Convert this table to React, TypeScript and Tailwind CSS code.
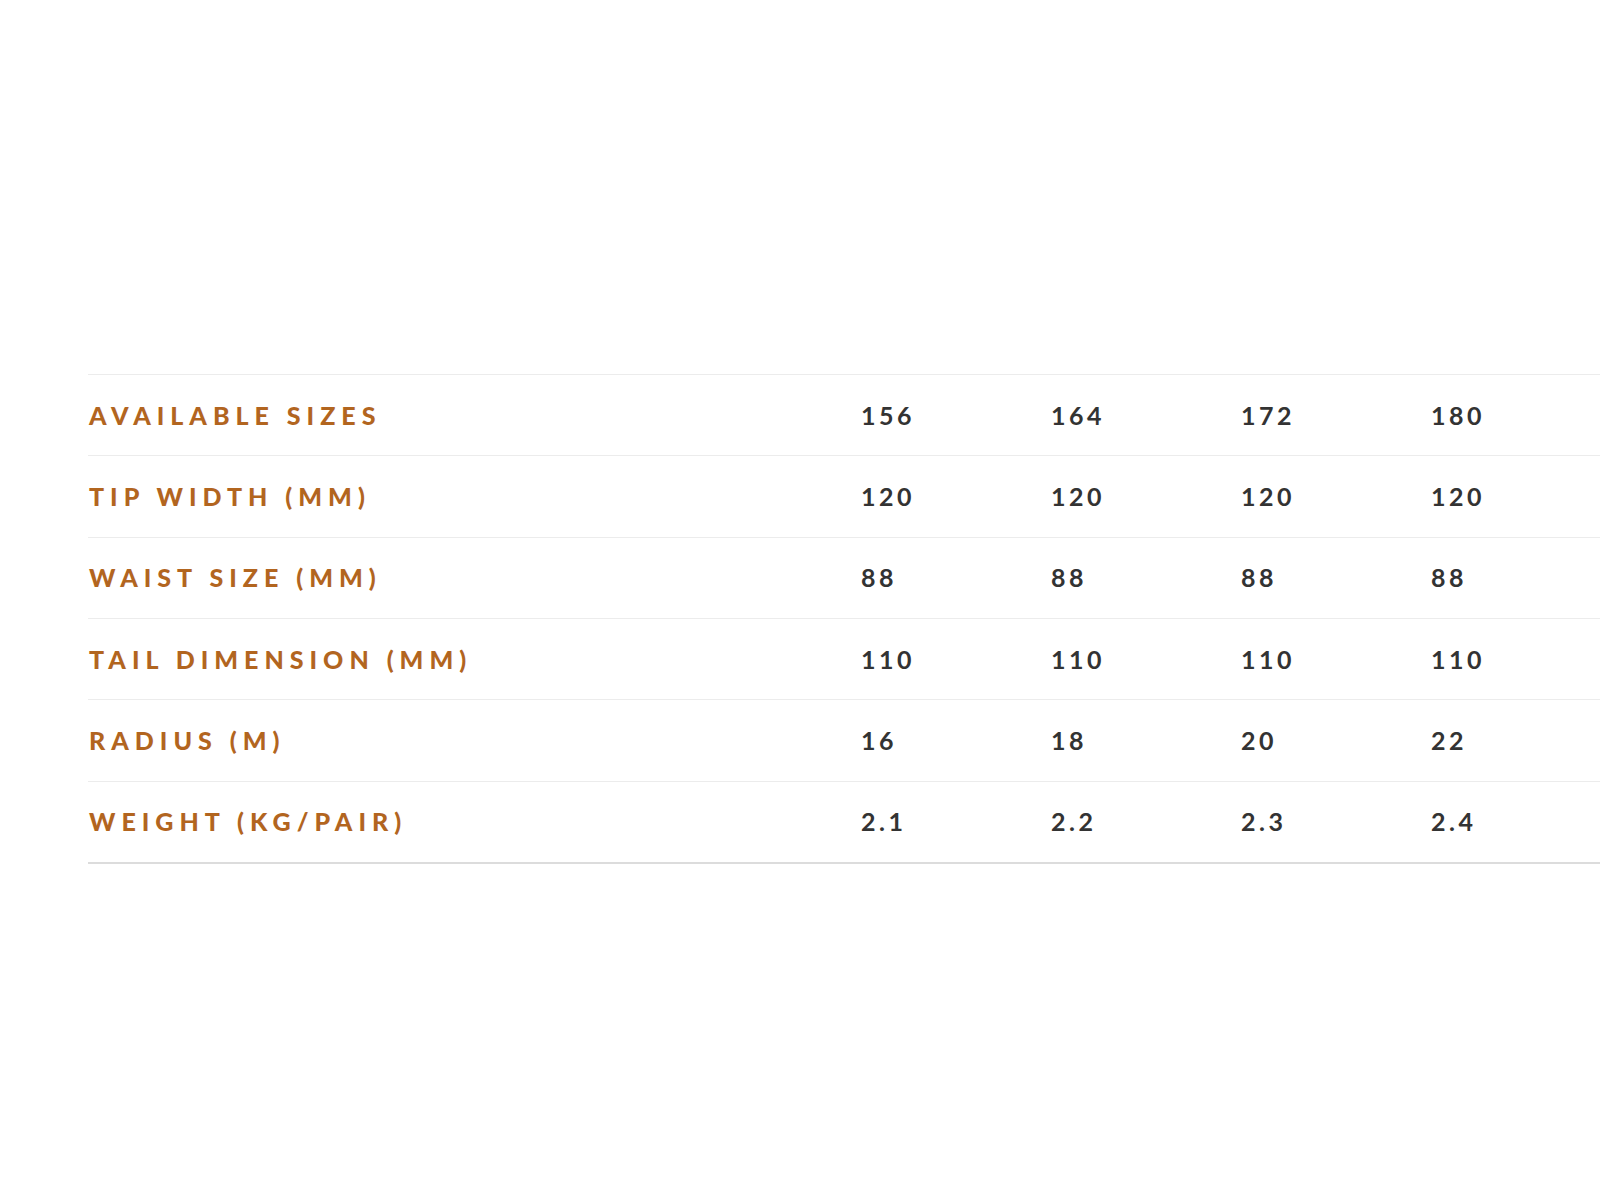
import React from 'react';

// Ski specs table
const SIZES = ['156', '164', '172', '180'];

const ROWS: { label: string; values: string[] }[] = [
  { label: 'Available Sizes', values: SIZES },
  { label: 'Tip Width (mm)', values: ['120', '120', '120', '120'] },
  { label: 'Waist Size (mm)', values: ['88', '88', '88', '88'] },
  { label: 'Tail Dimension (mm)', values: ['110', '110', '110', '110'] },
  { label: 'Radius (m)', values: ['16', '18', '20', '22'] },
  { label: 'Weight (kg/pair)', values: ['2.1', '2.2', '2.3', '2.4'] },
];

const App: React.FC = () => {
  return (
    <div className="min-h-screen w-full overflow-hidden bg-white">
      <div className="pt-[374px] pl-[88px]">
        <div className="w-[1540px] border-b-2 border-[#dcdcdc]">
          {ROWS.map((row) => (
            <div
              key={row.label}
              className="flex h-[81.33px] items-center border-t border-[#ececec]"
            >
              <div className="w-[772px] shrink-0 pl-[1px] font-['Lato',sans-serif] text-[25px] font-black uppercase leading-none tracking-[0.24em] text-[#b2651f]">
                {row.label}
              </div>
              {row.values.map((v, i) => (
                <div
                  key={i}
                  className="w-[190px] shrink-0 pl-[1px] font-['Lato',sans-serif] text-[25px] font-bold leading-none tracking-[0.14em] text-[#333333]"
                >
                  {v}
                </div>
              ))}
            </div>
          ))}
        </div>
      </div>
    </div>
  );
};

export default App;
